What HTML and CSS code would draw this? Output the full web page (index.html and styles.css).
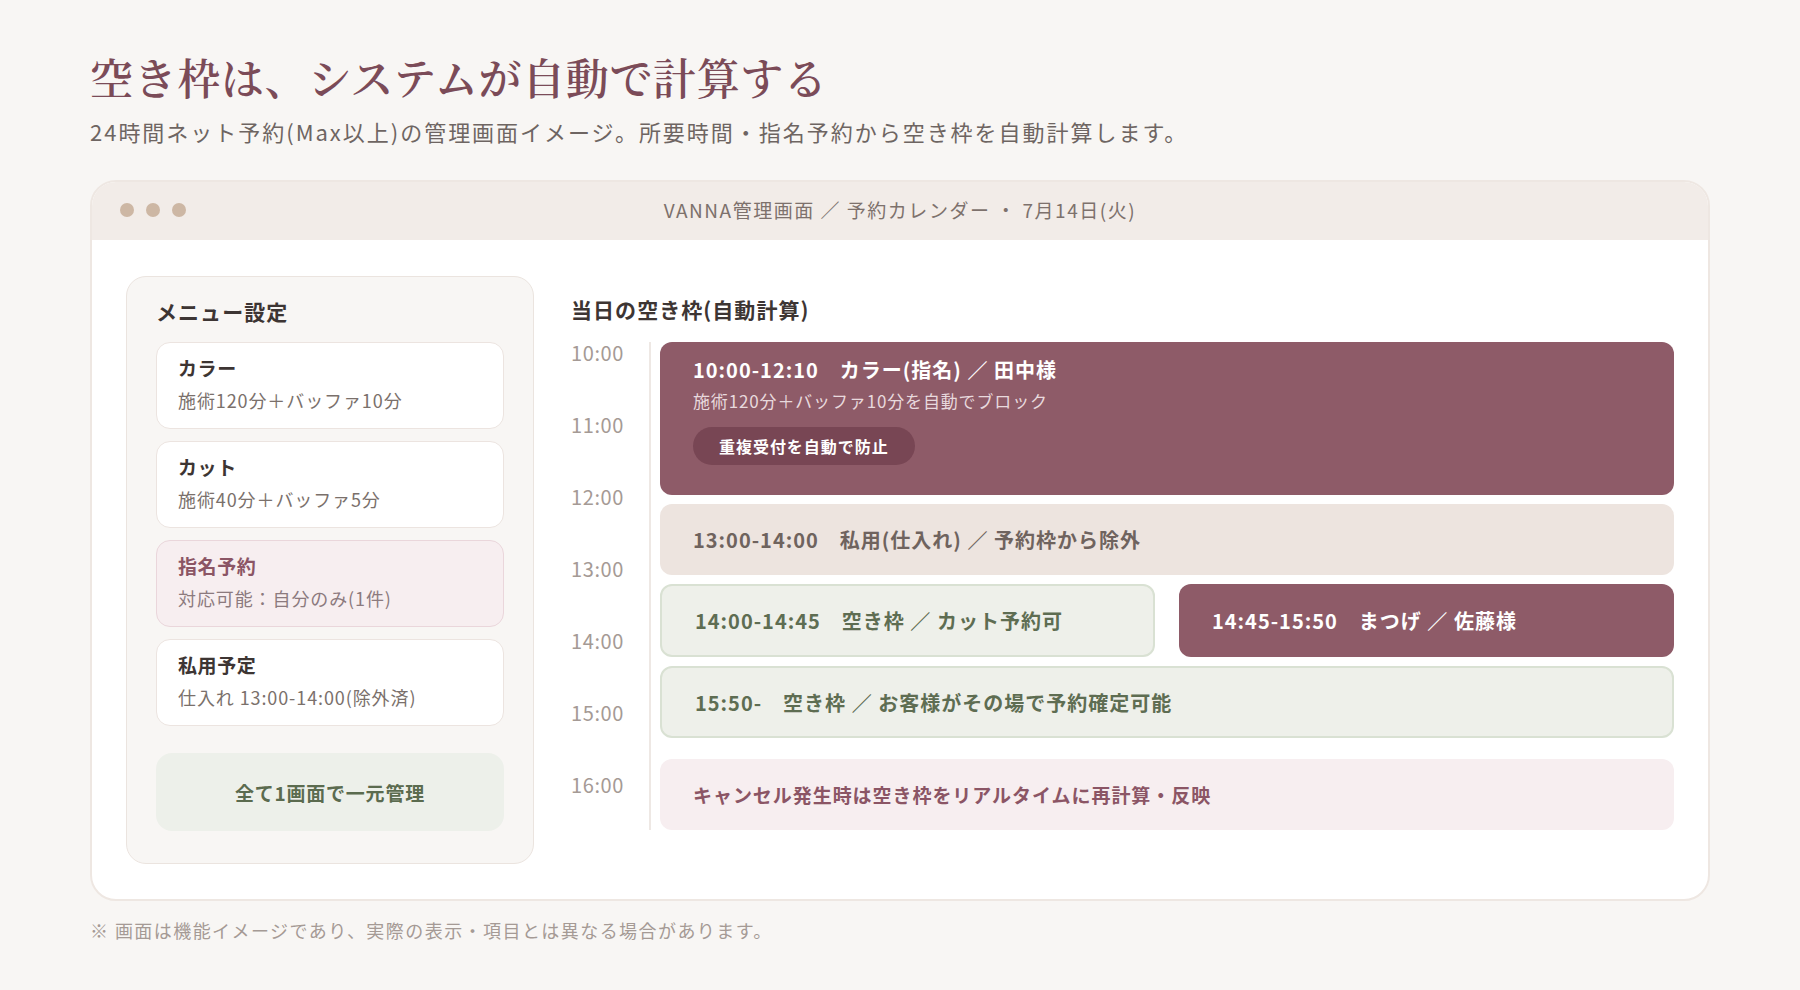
FILE: index.html
```html
<!DOCTYPE html>
<html lang="ja">
  <head>
    <meta charset="UTF-8" />
    <meta name="viewport" content="width=device-width, initial-scale=1.0" />
    <title>空き枠の自動計算</title>
    <link rel="stylesheet" href="styles.css">
  </head>
  <body>
    <main class="page">
      <h1 class="page-title">空き枠は、システムが自動で計算する</h1>
      <p class="page-lead">24時間ネット予約(Max以上)の管理画面イメージ。所要時間・指名予約から空き枠を自動計算します。</p>

      <section class="window">
        <div class="window-bar">
          <div class="dots">
            <span class="dot"></span>
            <span class="dot"></span>
            <span class="dot"></span>
          </div>
          <div class="window-title">VANNA管理画面 ／ 予約カレンダー ・ 7月14日(火)</div>
        </div>

        <div class="window-body">
          <aside class="menu-panel">
            <h2 class="panel-title">メニュー設定</h2>
            <div class="menu-card">
              <div class="menu-name">カラー</div>
              <div class="menu-desc">施術120分＋バッファ10分</div>
            </div>
            <div class="menu-card">
              <div class="menu-name">カット</div>
              <div class="menu-desc">施術40分＋バッファ5分</div>
            </div>
            <div class="menu-card is-pink">
              <div class="menu-name">指名予約</div>
              <div class="menu-desc">対応可能：自分のみ(1件)</div>
            </div>
            <div class="menu-card">
              <div class="menu-name">私用予定</div>
              <div class="menu-desc">仕入れ 13:00-14:00(除外済)</div>
            </div>
            <div class="menu-summary">全て1画面で一元管理</div>
          </aside>

          <div class="schedule">
            <h2 class="panel-title schedule-title">当日の空き枠(自動計算)</h2>
            <div class="timeline">
              <div class="hours">
                <span>10:00</span>
                <span>11:00</span>
                <span>12:00</span>
                <span>13:00</span>
                <span>14:00</span>
                <span>15:00</span>
                <span>16:00</span>
              </div>
              <div class="slots">
                <div class="slot slot-booked slot-tall">
                  <div class="slot-head">10:00-12:10　カラー(指名) ／ 田中様</div>
                  <div class="slot-sub">施術120分＋バッファ10分を自動でブロック</div>
                  <span class="pill">重複受付を自動で防止</span>
                </div>
                <div class="slot slot-private">13:00-14:00　私用(仕入れ) ／ 予約枠から除外</div>
                <div class="slot-row">
                  <div class="slot slot-free">14:00-14:45　空き枠 ／ カット予約可</div>
                  <div class="slot slot-booked">14:45-15:50　まつげ ／ 佐藤様</div>
                </div>
                <div class="slot slot-free">15:50-　空き枠 ／ お客様がその場で予約確定可能</div>
                <div class="slot slot-note">キャンセル発生時は空き枠をリアルタイムに再計算・反映</div>
              </div>
            </div>
          </div>
        </div>
      </section>

      <p class="footnote">※ 画面は機能イメージであり、実際の表示・項目とは異なる場合があります。</p>
    </main>
  </body>
</html>
```

FILE: styles.css
```css
body {
  margin: 0;
  background: #f8f6f4;
  font-family: "Noto Sans CJK JP", "Noto Sans", sans-serif;
  color: #3d3533;
}

.page {
  padding: 49px 90px 40px;
}

.page-title {
  margin: 0;
  font-family: "Noto Serif CJK JP", "Noto Sans CJK JP", serif;
  font-size: 43px;
  font-weight: 600;
  line-height: 56px;
  letter-spacing: 0.015em;
  color: #7b4b58;
}

.page-lead {
  margin: 10px 0 0;
  font-size: 22px;
  line-height: 32px;
  letter-spacing: 0.09em;
  color: #6e6562;
}

.window {
  margin-top: 33px;
  background: #fff;
  border: 2px solid #eee7e2;
  border-radius: 26px;
  overflow: hidden;
}

.window-bar {
  position: relative;
  height: 58px;
  box-sizing: border-box;
  padding-bottom: 3px;
  background: #f2ece8;
  display: flex;
  align-items: center;
  justify-content: center;
}

.dots {
  position: absolute;
  left: 28px;
  top: 21px;
  display: flex;
  gap: 12px;
}

.dot {
  width: 14px;
  height: 14px;
  border-radius: 50%;
  background: #cdb7a4;
}

.window-title {
  font-size: 19px;
  color: #7d716c;
  letter-spacing: 0.08em;
}

.window-body {
  display: grid;
  grid-template-columns: 408px 1fr;
  gap: 37px;
  padding: 36px 34px 35px;
}

.menu-panel {
  background: #f8f6f4;
  border: 1px solid #ebe4df;
  border-radius: 20px;
  padding: 20px 29px 32px;
  display: flex;
  flex-direction: column;
  gap: 12px;
}

.panel-title {
  margin: 0 0 5px;
  font-size: 21px;
  line-height: 28px;
  font-weight: 700;
  letter-spacing: 0.05em;
  color: #3d3533;
}

.menu-card {
  background: #fff;
  border: 1px solid #ece4e0;
  border-radius: 14px;
  padding: 12px 21px 15px;
}

.menu-name {
  font-size: 19px;
  line-height: 26px;
  font-weight: 700;
  letter-spacing: 0.03em;
  color: #3d3533;
}

.menu-desc {
  margin-top: 6px;
  font-size: 18px;
  line-height: 26px;
  letter-spacing: 0.05em;
  color: #7a706b;
}

.menu-card.is-pink {
  background: #f7eef0;
  border-color: #ead6db;
}

.is-pink .menu-name {
  color: #8b5565;
}

.is-pink .menu-desc {
  color: #8c7a7e;
}

.menu-summary {
  margin-top: 15px;
  height: 78px;
  border-radius: 16px;
  background: #edf0ea;
  display: flex;
  align-items: center;
  justify-content: center;
  font-size: 19px;
  font-weight: 700;
  letter-spacing: 0.04em;
  color: #5b6b4f;
}

.schedule {
  display: flex;
  flex-direction: column;
}

.schedule-title {
  margin: 19px 0 19px;
}

.timeline {
  display: flex;
}

.hours {
  width: 78px;
  border-right: 2px solid #eee8e4;
  display: flex;
  flex-direction: column;
  gap: 50px;
  font-size: 20px;
  line-height: 22px;
  letter-spacing: 0.03em;
  color: #a59a95;
}

.slots {
  flex: 1;
  margin-left: 9px;
  display: flex;
  flex-direction: column;
  gap: 9px;
}

.slot {
  border-radius: 12px;
  padding: 0 33px;
  height: 71px;
  display: flex;
  align-items: center;
  font-size: 20px;
  font-weight: 700;
  letter-spacing: 0.05em;
  box-sizing: border-box;
}

.slot-tall {
  height: 153px;
  flex-direction: column;
  align-items: flex-start;
  padding-top: 14px;
}

.slot-booked {
  background: #8e5b68;
  color: #fff;
}

.slot-head {
  line-height: 28px;
}

.slot-sub {
  margin-top: 5px;
  font-size: 17px;
  line-height: 24px;
  font-weight: 400;
  letter-spacing: 0.05em;
  color: #e8d9dd;
}

.pill {
  margin-top: 14px;
  height: 38px;
  padding: 0 26px;
  border-radius: 19px;
  background: #784654;
  display: flex;
  align-items: center;
  font-size: 16px;
  font-weight: 700;
  letter-spacing: 0.06em;
  color: #fff;
}

.slot-private {
  background: #ede4df;
  color: #6f635e;
}

.slot-row {
  display: grid;
  grid-template-columns: 1fr 1fr;
  gap: 24px;
}

.slot-row .slot {
  height: 73px;
}

.slot-free {
  background: #eef0ea;
  border: 2px solid #d9e1d3;
  color: #5e6d52;
  height: 72px;
}

.slot-note {
  margin-top: 12px;
  background: #f7eef0;
  color: #8b5565;
  font-size: 19px;
}

.footnote {
  margin: 15px 0 0;
  font-size: 18px;
  line-height: 28px;
  letter-spacing: 0.08em;
  color: #a59a95;
}
```
